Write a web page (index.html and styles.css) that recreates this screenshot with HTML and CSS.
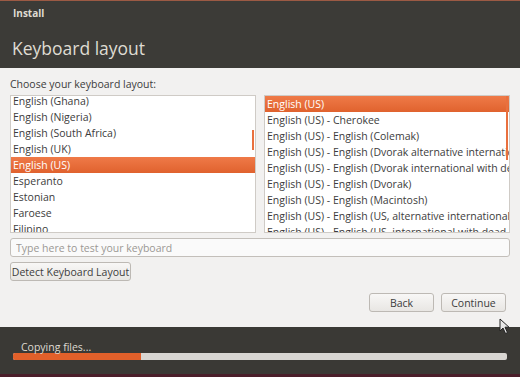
FILE: index.html
```html
<!DOCTYPE html>
<html lang="en">
<head>
    <meta charset="UTF-8" />
    <title>Install</title>
    <link rel="stylesheet" href="styles.css">
</head>
<body>
    <div class="window">
        <div class="top-line"></div>
        <div class="header">
            <div class="app-title">Install</div>
            <h1>Keyboard layout</h1>
        </div>

        <div class="content">
            <div class="choose-label">Choose your keyboard layout:</div>

            <div class="lists">
                <div class="list">
                    <div class="list-inner scrolled">
                        <div class="row">English (Ghana)</div>
                        <div class="row">English (Nigeria)</div>
                        <div class="row">English (South Africa)</div>
                        <div class="row">English (UK)</div>
                        <div class="row selected">English (US)</div>
                        <div class="row">Esperanto</div>
                        <div class="row">Estonian</div>
                        <div class="row">Faroese</div>
                        <div class="row">Filipino</div>
                    </div>
                    <div class="scroll-mark left-mark"></div>
                </div>
                <div class="list">
                    <div class="list-inner">
                        <div class="row selected">English (US)</div>
                        <div class="row">English (US) - Cherokee</div>
                        <div class="row">English (US) - English (Colemak)</div>
                        <div class="row">English (US) - English (Dvorak alternative international no dead keys)</div>
                        <div class="row">English (US) - English (Dvorak international with dead keys)</div>
                        <div class="row">English (US) - English (Dvorak)</div>
                        <div class="row">English (US) - English (Macintosh)</div>
                        <div class="row">English (US) - English (US, alternative international)</div>
                        <div class="row">English (US) - English (US, international with dead keys)</div>
                    </div>
                    <div class="scroll-mark right-mark"></div>
                </div>
            </div>

            <input class="test-input" type="text" placeholder="Type here to test your keyboard" />

            <div class="detect-row">
                <button class="btn detect-btn">Detect Keyboard Layout</button>
            </div>

            <div class="nav-buttons">
                <button class="btn nav-btn">Back</button>
                <button class="btn nav-btn">Continue</button>
            </div>
        </div>

        <div class="footer">
            <div class="status">Copying files...</div>
            <div class="progress">
                <div class="progress-fill" style="width: 26%;"></div>
            </div>
        </div>
        <div class="bottom-line"></div>

        <svg class="cursor" width="12" height="17" viewBox="0 0 12 17">
            <path d="M1 1 L1 13 L4 10 L6.5 15.5 L8.5 14.6 L6 9.2 L10 9.2 Z" fill="#e8e8e8" stroke="#222" stroke-width="1"/>
        </svg>
    </div>
</body>
</html>
```

FILE: styles.css
```css
body {
    margin: 0;
    font-family: "Open Sans", "DejaVu Sans", sans-serif;
    font-size: 10.5px;
    color: #3c3c3c;
}

.window {
    position: relative;
    width: 520px;
    height: 377px;
    overflow: hidden;
    display: flex;
    flex-direction: column;
}

.top-line {
    height: 1px;
    background-color: #9c5a44;
}

.header {
    height: 67px;
    background-color: #3c3b37;
    padding: 0 12px;
    box-sizing: border-box;
}

.app-title {
    padding-top: 5px;
    padding-left: 1px;
    font-size: 10px;
    font-weight: 700;
    color: #dfdbd2;
}

h1 {
    margin: 16px 0 0;
    font-size: 17.5px;
    font-weight: 400;
    color: #dfdbd2;
}

.content {
    height: 259px;
    background-color: #f2f1f0;
    padding: 9px 10px 0;
    box-sizing: border-box;
    display: flex;
    flex-direction: column;
}

.choose-label {
    height: 18px;
    line-height: 14px;
}

.lists {
    display: flex;
    gap: 8px;
}

.list {
    position: relative;
    width: 246px;
    height: 138px;
    background-color: #fff;
    border: 1px solid #cfcbc6;
    box-sizing: border-box;
    overflow: hidden;
}

.list-inner.scrolled {
    margin-top: -3px;
}

.row {
    height: 16px;
    line-height: 17px;
    padding-left: 2px;
    white-space: nowrap;
    overflow: hidden;
}

.row.selected {
    background: linear-gradient(#ef7a48, #e0622e);
    color: #fff;
}

.scroll-mark {
    position: absolute;
    width: 2px;
    background-color: #e9703e;
}

.left-mark {
    right: 1px;
    top: 34px;
    height: 20px;
}

.right-mark {
    right: 1px;
    top: 0;
    height: 64px;
}

.test-input {
    margin-top: 5px;
    height: 19px;
    border: 1px solid #c3bfba;
    border-radius: 3px;
    padding: 0 5px;
    font-family: inherit;
    font-size: 10.5px;
    background-color: #fafafa;
    box-sizing: border-box;
}

.test-input::placeholder {
    color: #9a9894;
}

.btn {
    height: 19px;
    border: 1px solid #bdb9b4;
    border-radius: 3px;
    background: linear-gradient(#f8f7f6, #e8e6e3);
    font-family: inherit;
    font-size: 10.5px;
    color: #3c3c3c;
    padding: 0;
    white-space: nowrap;
    box-sizing: border-box;
}

.detect-row {
    margin-top: 5px;
    display: flex;
}

.detect-btn {
    width: 121px;
}

.nav-buttons {
    margin-top: 12px;
    display: flex;
    justify-content: flex-end;
    gap: 7px;
    padding-right: 4px;
}

.nav-btn {
    width: 65px;
}

.footer {
    height: 47px;
    background-color: #3a3935;
    padding: 14px 13px 0;
    box-sizing: border-box;
}

.status {
    padding-left: 8px;
    height: 12px;
    line-height: 12px;
    color: #dfdbd2;
}

.progress {
    width: 494px;
    height: 7px;
    background-color: #d8d6d2;
    border-radius: 2px;
    overflow: hidden;
}

.progress-fill {
    height: 100%;
    background-color: #e1602a;
}

.bottom-line {
    height: 3px;
    background-color: #4a1e2a;
}

.cursor {
    position: absolute;
    left: 499px;
    top: 318px;
}
```
